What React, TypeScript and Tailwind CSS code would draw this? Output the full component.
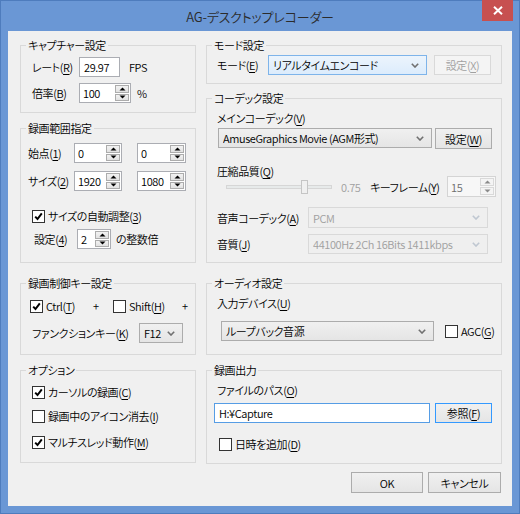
import React from "react";

const M = ({ c }: { c: string }) => (
  <>
    (<u className="underline-offset-[2px]">{c}</u>)
  </>
);

const Chevron = ({ color = "#6d6d6d" }: { color?: string }) => (
  <svg width="8" height="5" viewBox="0 0 8 5" className="shrink-0">
    <path d="M0.8 0.8 L4 4 L7.2 0.8" stroke={color} strokeWidth="1.6" fill="none" />
  </svg>
);

const Check = ({ checked }: { checked?: boolean }) => (
  <span className="w-[13px] h-[13px] border border-[#333333] bg-white flex items-center justify-center shrink-0">
    {checked && (
      <svg width="9" height="9" viewBox="0 0 9 9">
        <path d="M1.2 4.6 L3.5 7 L7.8 1.4" stroke="#000" strokeWidth="2" fill="none" />
      </svg>
    )}
  </span>
);

const Tri = ({ up, color = "#000" }: { up?: boolean; color?: string }) => (
  <svg width="7" height="4" viewBox="0 0 7 4">
    {up ? <path d="M0.5 3.6 L3.5 0.4 L6.5 3.6 Z" fill={color} /> : <path d="M0.5 0.4 L3.5 3.6 L6.5 0.4 Z" fill={color} />}
  </svg>
);

function Spin({ w, value, disabled }: { w: string; value: string; disabled?: boolean }) {
  return (
    <div
      className={`${w} h-full flex border ${
        disabled ? "border-[#d4d4d4] bg-[#f7f7f7] text-[#6d6d6d]" : "border-[#abadb3] bg-white text-black"
      }`}
    >
      <div className="flex-1 flex items-center pl-[3px]">{value}</div>
      <div className="w-[16px] flex flex-col p-[1px] gap-[1px]">
        <div
          className={`flex-1 flex items-center justify-center border ${
            disabled ? "border-[#d9d9d9] bg-[#f4f4f4]" : "border-[#acacac] bg-gradient-to-b from-[#f2f2f2] to-[#e2e2e2]"
          }`}
        >
          <Tri up color={disabled ? "#8a8a8a" : "#000"} />
        </div>
        <div
          className={`flex-1 flex items-center justify-center border ${
            disabled ? "border-[#d9d9d9] bg-[#f4f4f4]" : "border-[#acacac] bg-gradient-to-b from-[#f2f2f2] to-[#e2e2e2]"
          }`}
        >
          <Tri color={disabled ? "#8a8a8a" : "#000"} />
        </div>
      </div>
    </div>
  );
}

function Combo({
  w,
  children,
  variant = "normal",
}: {
  w: string;
  children: React.ReactNode;
  variant?: "normal" | "focus" | "disabled";
}) {
  const cls =
    variant === "focus"
      ? "border-[#7eb4ea] bg-gradient-to-b from-[#ecf4fc] to-[#dcecfc] text-black"
      : variant === "disabled"
      ? "border-[#d9d9d9] bg-[#efefef] text-[#a0a0a0]"
      : "border-[#acacac] bg-gradient-to-b from-[#f0f0f0] to-[#e5e5e5] text-black";
  return (
    <div className={`${w} h-full border ${cls} flex items-center pl-[4px] pr-[7px]`}>
      <div className="flex-1 whitespace-nowrap overflow-hidden">{children}</div>
      <Chevron color={variant === "disabled" ? "#bfc7d1" : "#707070"} />
    </div>
  );
}

function Btn({
  w,
  children,
  variant = "normal",
}: {
  w: string;
  children: React.ReactNode;
  variant?: "normal" | "disabled" | "default";
}) {
  const cls =
    variant === "disabled"
      ? "border-[#d9d9d9] bg-[#f4f4f4] text-[#a0a0a0]"
      : variant === "default"
      ? "border-[#3399ff] bg-gradient-to-b from-[#f0f0f0] to-[#e5e5e5] text-black"
      : "border-[#acacac] bg-gradient-to-b from-[#f0f0f0] to-[#e5e5e5] text-black";
  return <div className={`${w} h-full border ${cls} flex items-center justify-center whitespace-nowrap`}>{children}</div>;
}

function Group({ title, h, mt, children }: { title: string; h: string; mt: string; children?: React.ReactNode }) {
  return (
    <fieldset className={`${h} ${mt} border border-[#d9d9d9] flex flex-col`}>
      <legend className="ml-[5px] px-[2px] leading-4">{title}</legend>
      {children}
    </fieldset>
  );
}

export default function App() {
  return (
    <div className="w-[520px] h-[514px] bg-[#6a97d5] border border-[#4e7cbd] flex flex-col font-['Noto_Sans_CJK_JP',sans-serif] [font-feature-settings:'palt'] font-[350] text-[11px] tracking-[-0.4px] leading-4 text-black whitespace-nowrap">
      {/* title bar */}
      <div className="h-[30px] grid grid-cols-[1fr_auto_1fr] items-center">
        <div />
        <div className="text-[13px] tracking-[-0.2px] text-[#2b2b2b] pt-[1px]">AG-デスクトップレコーダー</div>
        <div className="self-start justify-self-end mr-[6px] -mt-[1px] w-[31px] h-[21px] bg-[#c75050] flex items-center justify-center">
          <svg width="10" height="9" viewBox="0 0 10 9">
            <path d="M1 0.8 L9 8.2 M9 0.8 L1 8.2" stroke="#fff" strokeWidth="2" />
          </svg>
        </div>
      </div>

      {/* client */}
      <div className="mx-[7px] h-[475px] bg-[#f0f0f0] pl-[12px] pt-[6px] flex gap-[10px]">
        {/* left column */}
        <div className="w-[176px] flex flex-col">
          <Group title="キャプチャー設定" h="h-[76px]" mt="mt-0">
            <div className="mt-[4px] h-[20px] flex items-center pl-[11px]">
              <span className="w-[47px]">
                レート<M c="R" />
              </span>
              <div className="w-[41px] h-full border border-[#abadb3] bg-white flex items-center pl-[4px]">29.97</div>
              <span className="ml-[9px]">FPS</span>
            </div>
            <div className="mt-[6px] h-[20px] flex items-center pl-[11px]">
              <span className="w-[47px]">
                倍率<M c="B" />
              </span>
              <Spin w="w-[52px]" value="100" />
              <span className="ml-[6px]">%</span>
            </div>
          </Group>

          <Group title="録画範囲指定" h="h-[143px]" mt="mt-[7px]">
            <div className="mt-[7px] h-[20px] flex items-center pl-[7px]">
              <span className="w-[46px]">
                始点<M c="1" />
              </span>
              <Spin w="w-[48px]" value="0" />
              <div className="w-[15px]" />
              <Spin w="w-[49px]" value="0" />
            </div>
            <div className="mt-[8px] h-[20px] flex items-center pl-[7px]">
              <span className="w-[46px]">
                サイズ<M c="2" />
              </span>
              <Spin w="w-[48px]" value="1920" />
              <div className="w-[15px]" />
              <Spin w="w-[49px]" value="1080" />
            </div>
            <div className="mt-[17px] h-[16px] flex items-center pl-[11px]">
              <Check checked />
              <span className="ml-[3px]">
                サイズの自動調整<M c="3" />
              </span>
            </div>
            <div className="mt-[5px] h-[20px] flex items-center pl-[13px]">
              <span className="w-[43px]">
                設定<M c="4" />
              </span>
              <Spin w="w-[34px]" value="2" />
              <span className="ml-[5px]">の整数倍</span>
            </div>
          </Group>

          <Group title="録画制御キー設定" h="h-[80px]" mt="mt-[12px]">
            <div className="mt-[7px] h-[16px] flex items-center pl-[9px]">
              <span className="w-[63px] flex items-center">
                <Check checked />
                <span className="ml-[3px]">
                  Ctrl<M c="T" />
                </span>
              </span>
              <span className="w-[20px]">+</span>
              <span className="w-[69px] flex items-center">
                <Check />
                <span className="ml-[3px]">
                  Shift<M c="H" />
                </span>
              </span>
              <span>+</span>
            </div>
            <div className="mt-[9px] h-[20px] flex items-center pl-[11px]">
              <span className="w-[107px]">
                ファンクションキー<M c="K" />
              </span>
              <Combo w="w-[44px]">F12</Combo>
            </div>
          </Group>

          <Group title="オプション" h="h-[101px]" mt="mt-[7px]">
            <div className="mt-[6px] h-[16px] flex items-center pl-[11px]">
              <Check checked />
              <span className="ml-[3px]">
                カーソルの録画<M c="C" />
              </span>
            </div>
            <div className="mt-[8px] h-[16px] flex items-center pl-[11px]">
              <Check />
              <span className="ml-[3px]">
                録画中のアイコン消去<M c="I" />
              </span>
            </div>
            <div className="mt-[10px] h-[16px] flex items-center pl-[11px]">
              <Check checked />
              <span className="ml-[3px]">
                マルチスレッド動作<M c="M" />
              </span>
            </div>
          </Group>
        </div>

        {/* right column */}
        <div className="w-[296px] flex flex-col">
          <Group title="モード設定" h="h-[47px]" mt="mt-0">
            <div className="mt-[2px] h-[20px] flex items-center pl-[10px]">
              <span className="w-[51px]">
                モード<M c="E" />
              </span>
              <Combo w="w-[159px]" variant="focus">
                リアルタイムエンコード
              </Combo>
              <div className="w-[7px]" />
              <Btn w="w-[57px]" variant="disabled">
                設定<M c="X" />
              </Btn>
            </div>
          </Group>

          <Group title="コーデック設定" h="h-[173px]" mt="mt-[6px]">
            <div className="mt-[4px] h-[16px] pl-[10px]">
              メインコーデック<M c="V" />
            </div>
            <div className="mt-[2px] h-[21px] flex items-start pl-[11px]">
              <div className="h-[20px] flex">
                <Combo w="w-[214px]">AmuseGraphics Movie (AGM形式)</Combo>
              </div>
              <div className="w-[3px]" />
              <Btn w="w-[57px]">
                設定<M c="W" />
              </Btn>
            </div>
            <div className="mt-[14px] h-[16px] pl-[10px]">
              圧縮品質<M c="Q" />
            </div>
            <div className="-mt-[3px] h-[21px] flex items-center pl-[19px]">
              <div className="w-[106px] h-[4px] border border-[#d6d6d6] bg-[#e7eaea] relative">
                <div className="absolute left-[74px] -top-[6px] w-[7px] h-[14px] border border-[#c5c5c5] bg-[#f0f0f0]" />
              </div>
              <span className="w-[38px] pl-[9px] text-[#a0a0a0]">0.75</span>
              <span className="w-[77px]">
                キーフレーム<M c="Y" />
              </span>
              <Spin w="w-[49px]" value="15" disabled />
            </div>
            <div className="mt-[10px] h-[21px] flex items-center pl-[10px]">
              <span className="w-[91px]">
                音声コーデック<M c="A" />
              </span>
              <Combo w="w-[180px]" variant="disabled">
                PCM
              </Combo>
            </div>
            <div className="mt-[6px] h-[20px] flex items-center pl-[10px]">
              <span className="w-[91px]">
                音質<M c="J" />
              </span>
              <Combo w="w-[180px]" variant="disabled">
                44100Hz 2Ch 16Bits 1411kbps
              </Combo>
            </div>
          </Group>

          <Group title="オーディオ設定" h="h-[80px]" mt="mt-[12px]">
            <div className="mt-[4px] h-[16px] pl-[10px]">
              入力デバイス<M c="U" />
            </div>
            <div className="mt-[10px] h-[20px] flex items-center pl-[14px]">
              <Combo w="w-[213px]">ループバック音源</Combo>
              <div className="w-[11px]" />
              <Check />
              <span className="ml-[3px]">
                AGC<M c="G" />
              </span>
            </div>
          </Group>

          <Group title="録画出力" h="h-[102px]" mt="mt-[7px]">
            <div className="mt-[4px] h-[16px] pl-[10px]">
              ファイルのパス<M c="O" />
            </div>
            <div className="mt-[5px] h-[20px] flex items-center pl-[7px]">
              <div className="w-[216px] h-full border border-[#569de5] bg-white flex items-center pl-[4px]">H:¥Capture</div>
              <div className="w-[5px]" />
              <Btn w="w-[57px]" variant="default">
                参照<M c="F" />
              </Btn>
            </div>
            <div className="mt-[13px] h-[16px] flex items-center pl-[12px]">
              <Check />
              <span className="ml-[3px]">
                日時を追加<M c="D" />
              </span>
            </div>
          </Group>

          <div className="mt-[8px] h-[21px] flex justify-end pr-[1px]">
            <Btn w="w-[72px]">OK</Btn>
            <div className="w-[5px]" />
            <Btn w="w-[73px]">キャンセル</Btn>
          </div>
        </div>
      </div>
    </div>
  );
}
